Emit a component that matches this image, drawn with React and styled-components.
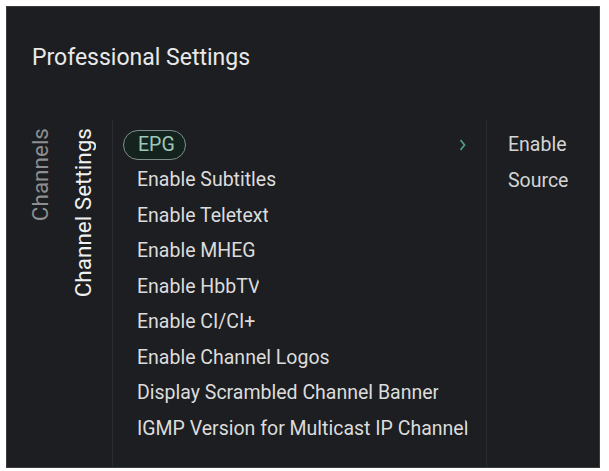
import React from "react";
import styled, { createGlobalStyle } from "styled-components";

const GlobalStyle = createGlobalStyle`
    html, body {
        margin: 0;
        padding: 0;
        background: #ffffff;
    }
    body {
        font-family: Roboto, "Liberation Sans", sans-serif;
    }
`;

const Page = styled.div`
    padding: 6px 9px 3px 6px;
`;

const Panel = styled.div`
    height: 462px;
    background: #1c1e21;
    border: 1px solid #3a3c3e;
    box-sizing: border-box;
    display: flex;
    flex-direction: column;
    overflow: hidden;
`;

const Header = styled.div`
    height: 113px;
    padding: 38px 0 0 25px;
    box-sizing: border-box;
    flex-shrink: 0;
`;

const Title = styled.h1`
    margin: 0;
    font-size: 23px;
    line-height: 26px;
    font-weight: 400;
    color: #e9e9e9;
`;

const Body = styled.div`
    flex: 1;
    display: flex;
`;

const Tabs = styled.div`
    width: 106px;
    flex-shrink: 0;
    border-right: 1px solid #2a2d30;
    display: flex;
    align-items: flex-start;
    gap: 22px;
    padding: 8px 0 0 23px;
    box-sizing: border-box;
`;

const Tab = styled.div`
    writing-mode: vertical-rl;
    transform: rotate(180deg);
    font-size: 22.5px;
    line-height: 21px;
    white-space: nowrap;
    color: ${(props) => (props.active ? "#f0f0f0" : "#8c8e90")};
`;

const List = styled.div`
    width: 374px;
    flex-shrink: 0;
    border-right: 1px solid #2a2d30;
    padding-top: 7px;
    box-sizing: border-box;
`;

const Row = styled.div`
    height: 35.5px;
    display: flex;
    align-items: center;
    padding: 0 17px 0 10px;
`;

const Label = styled.span`
    flex: 0 1 auto;
    min-width: 0;
    overflow: hidden;
    white-space: nowrap;
    font-size: 19.5px;
    line-height: 28px;
    height: 28px;
    box-sizing: border-box;
    padding: 0 ${(props) => (props.focused ? "10px" : "0")} 0 14px;
    color: ${(props) => (props.focused ? "#9cc8b9" : "#dcdcdc")};
    border: ${(props) => (props.focused ? "1.5px solid #7d8f89" : "none")};
    border-radius: 15px;
    background: ${(props) => (props.focused ? "#15231f" : "transparent")};
    ${(props) => (props.focused ? "height: 30px; line-height: 27px;" : "")}
`;

const Chevron = styled.svg`
    margin-left: auto;
    margin-right: 3px;
    flex-shrink: 0;
`;

const Options = styled.div`
    flex: 1;
    padding: 7px 0 0 21px;
`;

const Option = styled.div`
    height: 35.5px;
    display: flex;
    align-items: center;
    font-size: 19.5px;
    color: #d4d4d4;
`;

const items = [
    "EPG",
    "Enable Subtitles",
    "Enable Teletext",
    "Enable MHEG",
    "Enable HbbTV",
    "Enable CI/CI+",
    "Enable Channel Logos",
    "Display Scrambled Channel Banner",
    "IGMP Version for Multicast IP Channels",
];

const options = ["Enable", "Source"];

let App = () => {
    let focused = 0;
    return (
        <Page>
            <GlobalStyle />
            <Panel>
                <Header>
                    <Title>Professional Settings</Title>
                </Header>
                <Body>
                    <Tabs>
                        <Tab>Channels</Tab>
                        <Tab active>Channel Settings</Tab>
                    </Tabs>
                    <List>
                        {items.map((item, i) => (
                            <Row key={item}>
                                <Label focused={i === focused}>{item}</Label>
                                {i === focused && (
                                    <Chevron width="7" height="14" viewBox="0 0 7 14">
                                        <path
                                            d="M1.5 2 L5.5 7 L1.5 12"
                                            fill="none"
                                            stroke="#4f9a80"
                                            strokeWidth="1.8"
                                        />
                                    </Chevron>
                                )}
                            </Row>
                        ))}
                    </List>
                    <Options>
                        {options.map((option) => (
                            <Option key={option}>{option}</Option>
                        ))}
                    </Options>
                </Body>
            </Panel>
        </Page>
    );
};

export default App;
